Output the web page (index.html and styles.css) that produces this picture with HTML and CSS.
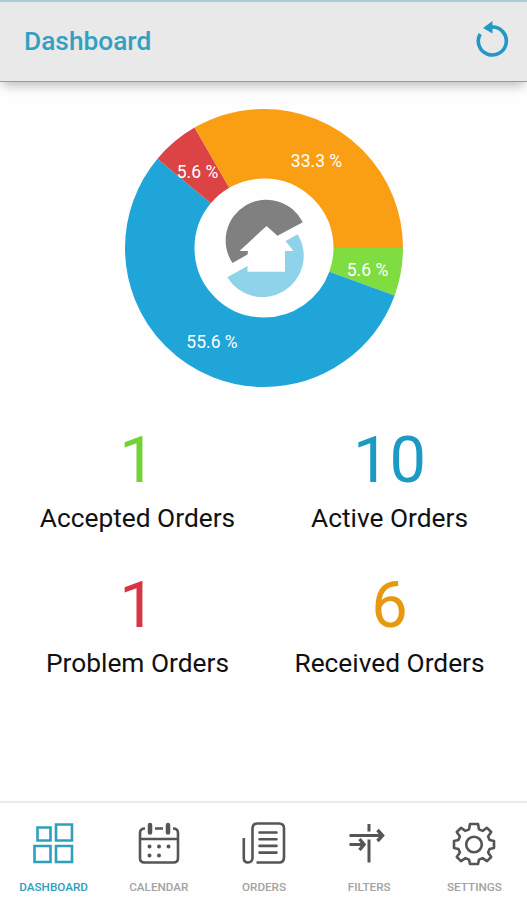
FILE: index.html
```html
<!DOCTYPE html>
<html lang="en">
  <head>
    <meta charset="UTF-8" />
    <meta name="viewport" content="width=device-width, initial-scale=1.0" />
    <title>Dashboard</title>
    <link rel="stylesheet" href="styles.css">
  </head>
  <body>
    <header class="header">
      <h1>Dashboard</h1>
      <button class="refresh" aria-label="Refresh">
        <svg width="36" height="38" viewBox="0 0 36 38">
          <path d="M5.2 13A14 14 0 1 0 17 6" fill="none" stroke="currentColor" stroke-width="3.6" />
          <path d="M8 7L17.500 0V12.500z" fill="currentColor" />
        </svg>
      </button>
    </header>

    <main class="content">
      <svg class="chart" width="280" height="280" viewBox="0 0 280 280">
        <!-- pathLength is the total number of orders -->
        <g fill="none" stroke-width="69.500">
          <circle class="slice accepted" cx="140" cy="140" r="104.250" pathLength="18" stroke-dasharray="1 17" />
          <circle class="slice active" cx="140" cy="140" r="104.250" pathLength="18" stroke-dasharray="10 8" stroke-dashoffset="-1" />
          <circle class="slice problem" cx="140" cy="140" r="104.250" pathLength="18" stroke-dasharray="1 17" stroke-dashoffset="-11" />
          <circle class="slice received" cx="140" cy="140" r="104.250" pathLength="18" stroke-dasharray="6 12" stroke-dashoffset="-12" />
        </g>
        <g class="chart-labels">
          <text x="192.500" y="59">33.3 %</text>
          <text x="73.500" y="70">5.6 %</text>
          <text x="243.500" y="168">5.6 %</text>
          <text x="88" y="240">55.6 %</text>
        </g>
        <!-- logo -->
        <path fill="#808080" d="M178.800 114.300A40.700 40.700 0 1 0 108.500 155L123.500 146.500L124 143H115.500L142.500 118L153.500 127.700Z" />
        <path fill="#8fd3ea" d="M173.700 126.300A41 41 0 0 1 103.300 169.300L123.500 158V163.700H161V143H169.500L161.500 133Z" />
      </svg>

      <section class="stats">
        <div class="stat accepted">
          <strong>1</strong>
          <span>Accepted Orders</span>
        </div>
        <div class="stat active">
          <strong>10</strong>
          <span>Active Orders</span>
        </div>
        <div class="stat problem">
          <strong>1</strong>
          <span>Problem Orders</span>
        </div>
        <div class="stat received">
          <strong>6</strong>
          <span>Received Orders</span>
        </div>
      </section>
    </main>

    <nav class="tabs">
      <a class="tab current">
        <svg width="44" height="44" viewBox="0 0 44 44">
          <path d="M5.500 5.500h13v13h-13zM24 2.500h16v16h-16zM2.500 24h16v16h-16zM24 24h16v16h-16z" />
        </svg>
        <span>Dashboard</span>
      </a>
      <a class="tab">
        <svg width="44" height="44" viewBox="0 0 44 44">
          <path d="M8 6.500Q3 6.500 3 11V36Q3 40.500 7.500 40.500H36.500Q41 40.500 41 36V11Q41 6.500 36 6.500M18 6.500H26M3 17H41" />
          <path stroke-width="4.500" stroke-linecap="round" d="M13 3V10.500M31 3V10.500" />
          <path stroke-width="4" stroke-linecap="round" d="M12.500 24.500h.01M22 24.500h.01M31.500 24.500h.01M12.500 33.500h.01M22 33.500h.01" />
        </svg>
        <span>Calendar</span>
      </a>
      <a class="tab">
        <svg width="44" height="44" viewBox="0 0 44 44">
          <path d="M1.800 16V36Q1.800 40.500 6 40.500T10.500 36V6.500Q10.500 1.500 15.500 1.500H37Q42 1.500 42 6.500V35.500Q42 40.500 37 40.500H14.500" />
          <path stroke-linecap="round" d="M17.500 10.500h17M17.500 17.200h17M17.500 23.900h17M17.500 30.600h17" />
        </svg>
        <span>Orders</span>
      </a>
      <a class="tab">
        <svg width="44" height="44" viewBox="0 0 44 44">
          <path stroke-width="3" d="M22 2V9.500M22 17.500V40.500M2.500 13.500H35M2.500 22.500H15" />
          <path stroke-width="3.400" d="M30.500 8L35.500 13.500L30.500 19M12.500 17L17 22.500L12.500 28" />
        </svg>
        <span>Filters</span>
      </a>
      <a class="tab">
        <svg width="44" height="44" viewBox="0 0 44 44">
          <path stroke-linejoin="round" d="M18 2H26L27 7.400L30.600 8.900L35 5.800L39.200 10L36.100 14.400L37.600 18L42 19V26L37.600 27L36.100 30.600L39.200 35L35 39.200L30.600 36.100L27 37.600L26 42H18L17 37.600L13.400 36.100L9 39.200L4.800 35L7.900 30.600L6.400 27L2 26V19L6.400 18L7.900 14.400L4.800 10L9 5.800L13.400 8.900L17 7.400Z" />
          <circle cx="22" cy="22.500" r="7.800" />
        </svg>
        <span>Settings</span>
      </a>
    </nav>
  </body>
</html>
```
FILE: styles.css
```css
* {
  box-sizing: border-box;
}

body {
  margin: 0;
  height: 100vh;
  display: flex;
  flex-direction: column;
  font-family: Roboto, sans-serif;
  background-color: #fefefe;
  color: #111;
  overflow: hidden;
}

.header {
  height: 82px;
  padding: 0 16px 1px 24px;
  display: flex;
  align-items: center;
  justify-content: space-between;
  background-color: #e9e9e9;
  border-top: 2px solid #a9ccd5;
  border-bottom: 1px solid #999;
  box-shadow: 0 7px 10px -3px rgba(0, 0, 0, 0.25);
}

.header h1 {
  margin: 0;
  font-size: 26.3px;
  font-weight: 500;
  color: #33a0c2;
}

.refresh {
  display: flex;
  padding: 0 0 3px;
  border: none;
  background: none;
  color: #2199c4;
}

.content {
  flex: 1;
  display: flex;
  flex-direction: column;
  align-items: center;
  padding-top: 26px;
}

.chart-labels {
  font-size: 17.5px;
  fill: #fff;
  text-anchor: middle;
}

.slice.accepted {
  stroke: #7fdc41;
}

.slice.active {
  stroke: #20a5d8;
}

.slice.problem {
  stroke: #db4344;
}

.slice.received {
  stroke: #fa9f13;
}

.stats {
  width: 504px;
  margin-top: 33px;
  display: grid;
  grid-template-columns: 1fr 1fr;
  row-gap: 15px;
}

.stat {
  height: 130px;
  display: flex;
  flex-direction: column;
  align-items: center;
}

.stat strong {
  font-size: 65px;
  line-height: 78px;
  font-weight: 400;
}

.stat span {
  font-size: 26.3px;
  line-height: 38px;
  color: #111;
}

.stat.accepted {
  color: #72d235;
}

.stat.active {
  color: #1b9ac4;
}

.stat.problem {
  color: #d63643;
}

.stat.received {
  color: #e6980f;
}

.tabs {
  height: 99px;
  padding-left: 1px;
  display: flex;
  border-top: 2px solid #e9e9e9;
}

.tab {
  flex: 1;
  display: flex;
  flex-direction: column;
  align-items: center;
  gap: 14px;
  padding-top: 19px;
  color: #555;
}

.tab svg {
  fill: none;
  stroke: currentColor;
  stroke-width: 2.6;
}

.tab span {
  font-size: 11.7px;
  line-height: 14px;
  font-weight: 500;
  text-transform: uppercase;
  color: #a3a3a3;
}

.tab.current,
.tab.current span {
  color: #2f9fbe;
}
```
